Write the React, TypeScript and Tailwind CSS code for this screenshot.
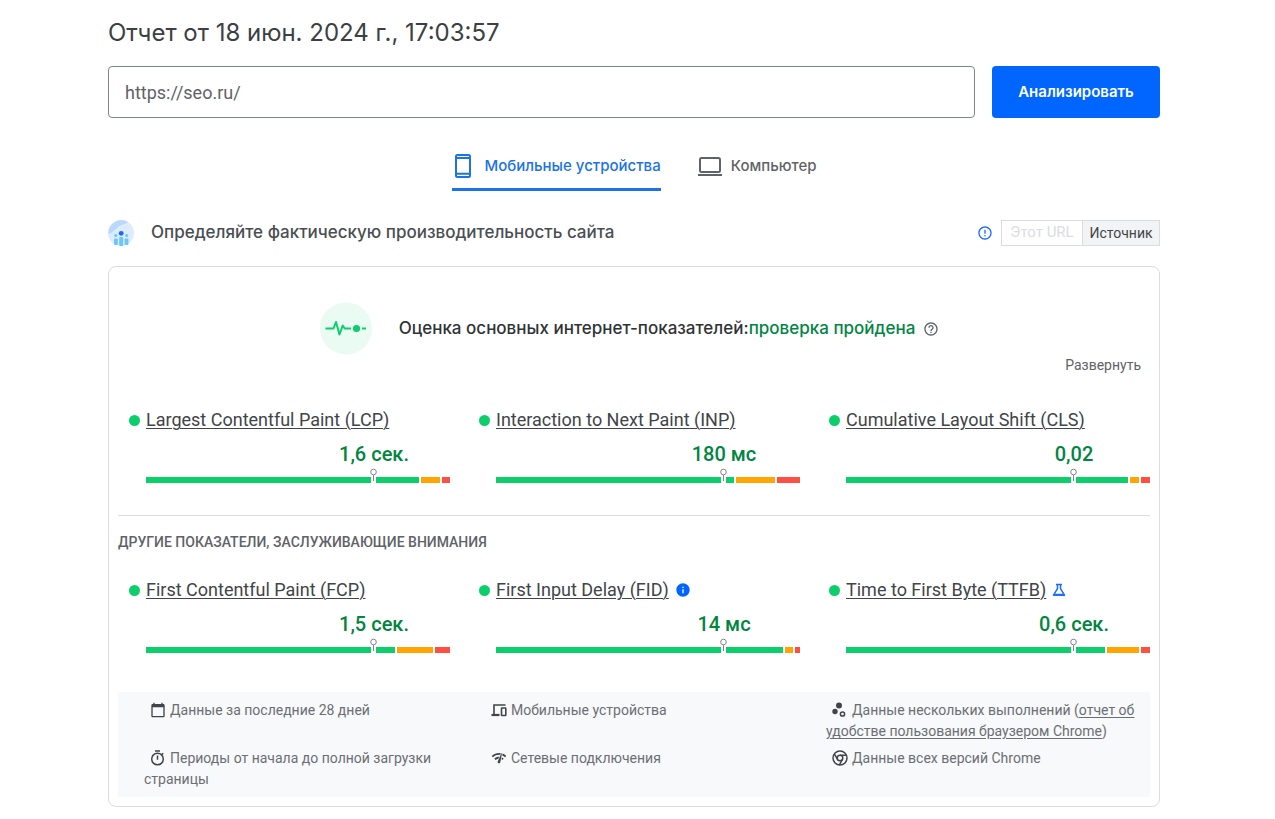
import { useState } from "react";
import type { ReactNode } from "react";
import { MdErrorOutline, MdHelpOutline, MdInfo, MdCalendarToday, MdNetworkCheck } from "react-icons/md";

type Metric = {
  name: string;
  value: string;
  good: number;
  medium: number;
  poor: number;
  badge?: ReactNode;
};

const DISPLAY = "font-['Google_Sans','Inter',sans-serif]";

function PhoneIcon() {
  return (
    <svg viewBox="0 0 22 26" className="h-[26px] w-[22px]" fill="none" stroke="currentColor" strokeWidth="2" aria-hidden="true">
      <rect x="4" y="2" width="14" height="22" rx="1.500" />
      <path d="M4 5h14M4 20.800h14" />
    </svg>
  );
}

function LaptopIcon() {
  return (
    <svg viewBox="0 0 26 26" className="size-[26px]" fill="none" stroke="currentColor" strokeWidth="2" aria-hidden="true">
      <rect x="3" y="5" width="20" height="14" rx="1.500" />
      <path d="M1 22h24" />
    </svg>
  );
}

function FlaskIcon() {
  return (
    <svg viewBox="0 0 14 14" className="size-3.5" fill="none" stroke="#1a6dff" strokeWidth="1.5" aria-hidden="true">
      <path d="M4 1.500h6" />
      <path d="M5.500 1.500v4.200L1.500 12.200h11L8.500 5.700V1.500" strokeLinejoin="round" />
      <path d="M2.500 11.500h9" />
    </svg>
  );
}

function DevicesIcon() {
  return (
    <svg viewBox="0 0 16 16" className="size-4" fill="none" stroke="currentColor" strokeWidth="1.6" aria-hidden="true">
      <path d="M14.500 3H3v9" />
      <path d="M0.500 13h8" strokeWidth="2.200" />
      <rect x="10.500" y="6" width="4.300" height="7.500" rx="0.500" />
    </svg>
  );
}

function TimerIcon() {
  return (
    <svg viewBox="0 0 16 16" className="size-4" fill="none" stroke="currentColor" strokeWidth="1.500" aria-hidden="true">
      <circle cx="7.500" cy="9" r="5.800" />
      <path d="M5 1h5M7.500 5.500v4.200M11.800 4.600l1.400-1.400" />
    </svg>
  );
}

function SamplesIcon() {
  return (
    <svg viewBox="0 0 16 16" className="size-4" aria-hidden="true">
      <circle cx="7" cy="3.500" r="3" fill="#414549" />
      <circle cx="3" cy="9.500" r="2.700" fill="#414549" />
      <circle cx="10.500" cy="12" r="2.100" fill="none" stroke="#414549" strokeWidth="1.500" />
    </svg>
  );
}

function ChromeIcon() {
  return (
    <svg viewBox="0 0 16 16" className="size-4" fill="none" stroke="#414549" strokeWidth="1.5" aria-hidden="true">
      <circle cx="8" cy="8" r="7" />
      <circle cx="8" cy="8" r="2.8" />
      <path d="M8 5.2h6.2M5.6 9.4 2.3 4M10.4 9.4 7.3 15" />
    </svg>
  );
}

function FieldDataIcon() {
  return (
    <svg viewBox="0 0 26 26" className="size-[26px]" aria-hidden="true">
      <circle cx="13" cy="13" r="13" fill="#dcebfe" />
      <path d="M0.500 14A13 13 0 0 1 20 2C17 5 13 4 10 7S5 12 0.500 14z" fill="#b9d8fd" />
      <g fill="#6cc6fb">
        <rect x="6" y="18.500" width="3.800" height="6.500" rx="1" />
        <rect x="11.200" y="17" width="4" height="9" rx="1" />
        <rect x="16.600" y="18.500" width="3.800" height="6.500" rx="1" />
        <circle cx="7.800" cy="15.500" r="1.500" />
        <circle cx="18.600" cy="15.500" r="1.500" />
      </g>
      <circle cx="13.2" cy="13.3" r="2.4" fill="#1769ff" />
    </svg>
  );
}

function PulseIcon() {
  return (
    <svg viewBox="0 0 54 54" className="size-[54px]" aria-hidden="true">
      <circle cx="27" cy="26.500" r="26" fill="#e9fbf2" />
      <path
        d="M6.500 26.500h8l2.500-6.500 3.500 12.500 3.200-9 2 3H32"
        fill="none"
        stroke="#0cce6b"
        strokeWidth="2"
        strokeLinejoin="round"
      />
      <circle cx="37.500" cy="26.500" r="3.600" fill="#0cce6b" />
      <path d="M43 26.500h4" stroke="#0cce6b" strokeWidth="2" />
    </svg>
  );
}

const coreMetrics: Metric[] = [
  { name: "Largest Contentful Paint (LCP)", value: "1,6 сек.", good: 43, medium: 19, poor: 8 },
  { name: "Interaction to Next Paint (INP)", value: "180 мс", good: 8, medium: 38, poor: 22 },
  { name: "Cumulative Layout Shift (CLS)", value: "0,02", good: 52, medium: 9, poor: 9 },
];

const otherMetrics: Metric[] = [
  { name: "First Contentful Paint (FCP)", value: "1,5 сек.", good: 19, medium: 36, poor: 15 },
  {
    name: "First Input Delay (FID)",
    value: "14 мс",
    good: 55,
    medium: 8,
    poor: 5,
    badge: <MdInfo className="size-4 text-[#06f]" />,
  },
  { name: "Time to First Byte (TTFB)", value: "0,6 сек.", good: 29, medium: 31, poor: 9, badge: <FlaskIcon /> },
];

function MetricCard({ metric }: { metric: Metric }) {
  return (
    <div>
      <div className="flex h-6 items-center pl-[11px]">
        <span className="mr-1.5 size-[11px] shrink-0 rounded-full bg-[#0cce6b]" />
        <a href="#" className="text-lg leading-6 text-[#414549] underline decoration-1 underline-offset-2">
          {metric.name}
        </a>
        {metric.badge && <span className="ml-1.5">{metric.badge}</span>}
      </div>
      <div className="pl-7">
        <div className="mt-2.5 ml-auto w-1/2 text-center text-xl leading-6 font-medium text-[#018642]">
          {metric.value}
        </div>
        <div className="relative mt-[11px] flex h-1.5">
          <div className="mr-[5px] w-[calc(75%-3px)] shrink-0 bg-[#0cce6b]" />
          <div className="flex grow gap-0.5">
            <div className="basis-0 bg-[#0cce6b]" style={{ flexGrow: metric.good }} />
            <div className="basis-0 bg-[#ffa400]" style={{ flexGrow: metric.medium }} />
            <div className="basis-0 bg-[#ff4e42]" style={{ flexGrow: metric.poor }} />
          </div>
          <svg viewBox="0 0 9 14" className="absolute -top-[9px] left-3/4 -ml-[5px] h-3.5 w-[9px]" fill="none" stroke="#80868b" aria-hidden="true">
            <circle cx="4.500" cy="4" r="2.800" fill="#fff" />
            <path d="M4.500 7V13" />
          </svg>
        </div>
      </div>
    </div>
  );
}

function Note({ icon, children }: { icon: ReactNode; children: ReactNode }) {
  return (
    <p className="min-h-12 text-sm leading-[21px] text-[#6b6f73]">
      <span className="mr-1 ml-1.5 inline-block align-[-3px] text-base text-[#414549]">{icon}</span>
      {children}
    </p>
  );
}

export default function App() {
  const [url, setUrl] = useState("https://seo.ru/");

  return (
    <main className="min-h-screen bg-white pr-[115px] pb-3 pl-[108px] font-['Roboto',sans-serif] text-[#5f6368]">
      <h1 className={`${DISPLAY} pt-[17px] text-2xl leading-8 text-[#3c4043]`}>Отчет от 18 июн. 2024 г., 17:03:57</h1>

      <form className="mt-[17px] flex gap-[17px]" onSubmit={(e) => e.preventDefault()}>
        <input
          type="text"
          aria-label="URL"
          value={url}
          onChange={(e) => setUrl(e.target.value)}
          className="h-[52px] min-w-0 grow rounded border border-[#80868b] px-4 text-lg text-[#5f6368]"
        />
        <button type="submit" className={`${DISPLAY} h-[52px] w-[168px] rounded bg-[#06f] text-[15px] font-semibold text-white`}>
          Анализировать
        </button>
      </form>

      <nav className={`${DISPLAY} mt-[22px] flex justify-center gap-9 text-[15px] font-medium`}>
        <button type="button" className="flex h-[51px] items-center gap-[11px] border-b-3 border-[#1a73e8] pt-1 text-[#1a73e8]">
          <PhoneIcon />
          Мобильные устройства
        </button>
        <button type="button" className="flex h-[51px] items-center gap-2 border-b-3 border-transparent pt-1">
          <LaptopIcon />
          Компьютер
        </button>
      </nav>

      <div className="mt-[29px] flex h-[26px] items-center">
        <FieldDataIcon />
        <h2 className={`${DISPLAY} ml-[17px] text-[17px] font-medium text-[#4a4e52]`}>
          Определяйте фактическую производительность сайта
        </h2>
        <MdErrorOutline className="mr-2 ml-auto size-4 text-[#1a6dff]" />
        <div className="flex text-sm">
          <button type="button" disabled className="h-[26px] w-[81px] border border-r-0 border-[#dadce0] text-[15px] text-[#dadce0]">
            Этот URL
          </button>
          <button type="button" className="h-[26px] w-[78px] border border-[#dadce0] bg-[#f1f3f4] text-[#414549]">
            Источник
          </button>
        </div>
      </div>

      <section className="mt-5 rounded-lg border border-[#dadce0] px-[9px] pb-[9px]">
        <div className="mt-[35px] flex h-[54px] items-center justify-center pr-2.5">
          <PulseIcon />
          <p className={`${DISPLAY} mr-2 ml-[26px] text-[17px] font-medium text-[#303336]`}>
            Оценка основных интернет-показателей:<span className="text-[#018642]">проверка пройдена</span>
          </p>
          <MdHelpOutline className="size-4" />
        </div>
        <div className="flex justify-end pr-[9px]">
          <button type="button" className="h-[18px] text-sm leading-[18px]">
            Развернуть
          </button>
        </div>

        <div className="mt-[34px] grid grid-cols-3 gap-[18px] border-b border-[#dadce0] pb-8">
          {coreMetrics.map((m) => (
            <MetricCard key={m.name} metric={m} />
          ))}
        </div>

        <h3 className="mt-4 text-sm leading-5 font-medium">ДРУГИЕ ПОКАЗАТЕЛИ, ЗАСЛУЖИВАЮЩИЕ ВНИМАНИЯ</h3>
        <div className="mt-[26px] grid grid-cols-3 gap-[18px]">
          {otherMetrics.map((m) => (
            <MetricCard key={m.name} metric={m} />
          ))}
        </div>

        <div className="mt-[39px] grid grid-cols-3 gap-x-[26px] bg-[#f8f9fa] pt-2 pr-[9px] pb-px pl-[26px]">
          <Note icon={<MdCalendarToday />}>Данные за последние 28 дней</Note>
          <Note icon={<DevicesIcon />}>Мобильные устройства</Note>
          <Note icon={<SamplesIcon />}>
            Данные нескольких выполнений (
            <a href="#" className="underline underline-offset-2">
              отчет об удобстве пользования браузером Chrome
            </a>
            )
          </Note>
          <Note icon={<TimerIcon />}>Периоды от начала до полной загрузки страницы</Note>
          <Note icon={<MdNetworkCheck />}>Сетевые подключения</Note>
          <Note icon={<ChromeIcon />}>Данные всех версий Chrome</Note>
        </div>
      </section>
    </main>
  );
}
